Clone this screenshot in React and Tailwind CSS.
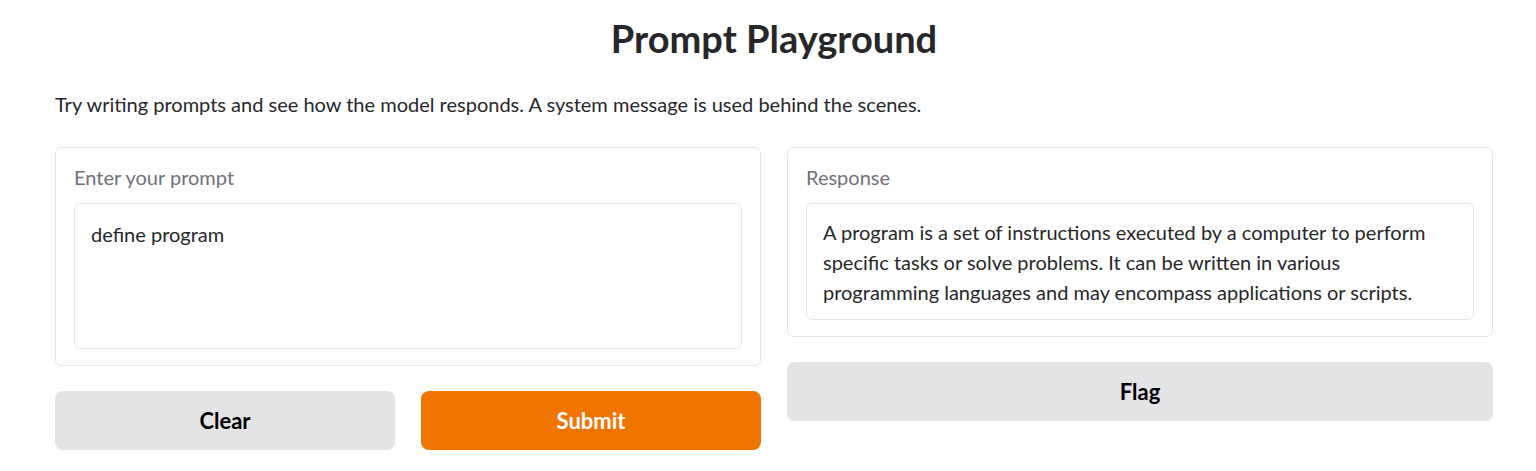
export default function App() {
  return (
    <div className="w-[1536px] h-[471px] bg-white text-[#27272a] font-['Lato',sans-serif]">
      <div className="w-[1438px] ml-[55px] flex flex-col">
        <h1 className="text-center text-[38px] font-bold leading-[44px] pt-[16px]">Prompt Playground</h1>
        <p className="text-[20px] leading-[28px] mt-[30px]">
          Try writing prompts and see how the model responds. A system message is used behind the scenes.
        </p>
        <div className="grid grid-cols-2 gap-[26px] mt-[29px] items-start">
          <div className="flex flex-col gap-[25px]">
            <div className="border border-[#e5e7eb] rounded-[6px] px-[18px] pt-[16px] pb-[16px]">
              <div className="text-[20px] leading-[26px] text-[#71717a]">Enter your prompt</div>
              <div className="mt-[13px] h-[146px] border border-[#e5e7eb] rounded-[6px] px-[16px] pt-[16px] text-[20px] leading-[28px]">
                define program
              </div>
            </div>
            <div className="grid grid-cols-2 gap-[26px]">
              <button className="h-[59px] rounded-[8px] bg-[#e4e4e7] text-[22px] font-bold text-black">Clear</button>
              <button className="h-[59px] rounded-[8px] bg-[#f07400] text-[22px] font-bold text-white">Submit</button>
            </div>
          </div>
          <div className="flex flex-col gap-[25px]">
            <div className="border border-[#e5e7eb] rounded-[6px] px-[18px] pt-[16px] pb-[16px]">
              <div className="text-[20px] leading-[26px] text-[#71717a]">Response</div>
              <div className="mt-[13px] border border-[#e5e7eb] rounded-[6px] px-[16px] pt-[13px] pb-[12px] text-[20px] leading-[30px]">
                A program is a set of instructions executed by a computer to perform specific tasks or solve problems. It can be written in various programming languages and may encompass applications or scripts.
              </div>
            </div>
            <button className="h-[59px] rounded-[8px] bg-[#e4e4e7] text-[22px] font-bold text-black">Flag</button>
          </div>
        </div>
      </div>
    </div>
  );
}
